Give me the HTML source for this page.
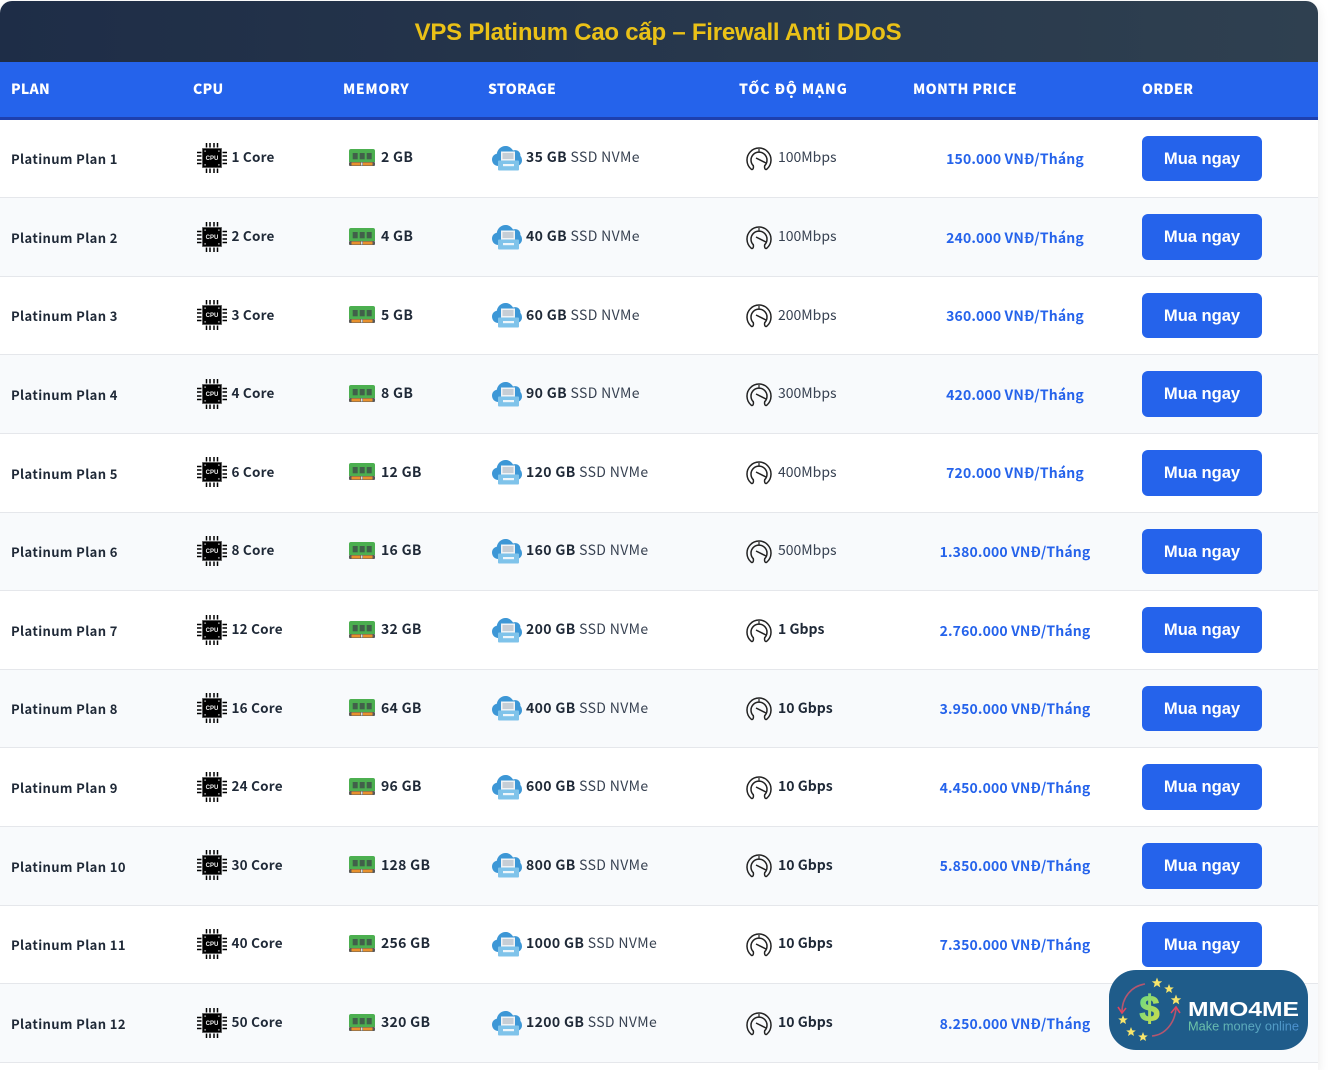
<!DOCTYPE html>
<html lang="vi"><head><meta charset="utf-8"><title>VPS Platinum</title>
<style>
html,body{margin:0;padding:0;background:#fff;width:1331px;height:1070px;overflow:hidden}
body{font-family:"Noto Sans CJK JP","Liberation Sans",sans-serif;position:relative}
#card{position:absolute;left:0;top:1px;width:1318px;height:1069px;background:#fff;border-radius:12px 12px 0 0;overflow:hidden}
#shadow{position:absolute;left:0;top:1px;width:1318px;height:1069px;border-radius:12px 12px 0 0;box-shadow:0 4px 12px rgba(0,0,0,.09)}
#title{position:absolute;left:0;top:0;width:1316px;padding-right:2px;height:61px;background:linear-gradient(90deg,#1e2d47,#2f4050);color:#eac117;font:700 24px/63px "Liberation Sans",sans-serif;text-align:center;letter-spacing:-.24px}
#head{position:absolute;left:0;top:61px;width:1318px;height:55px;background:#2563eb;border-bottom:3px solid #1e40af;color:#fff;font-weight:900;font-size:14px}
#head span{position:absolute;top:0;line-height:55px;white-space:nowrap;letter-spacing:.3px}
.r{position:absolute;left:0;width:1318px;height:78.6px;border-bottom:1px solid #e5e7eb;box-sizing:border-box;background:#fff}
.r.e{background:#f8fafc}
.r>*{position:absolute;white-space:nowrap}
.p{left:11px;top:28.6px;font-size:13px;line-height:22px;font-weight:700;color:#1f2937;letter-spacing:.38px}
.t{top:26.8px;font-size:14px;line-height:22px;color:#374151;letter-spacing:.3px}
.t b{color:#1f2937;font-weight:700}
.t.c{left:231.5px;top:25.9px;font-size:13.5px;letter-spacing:.2px}.m{left:381px}.s{left:526px;letter-spacing:.35px}.t.n{left:778px;letter-spacing:0}
.v{left:915px;width:200px;text-align:center;top:28.4px;font-size:14px;line-height:22px;font-weight:700;color:#2563eb;letter-spacing:.14px}
.a{left:1142px;top:16px;width:120px;height:45.5px;background:#2563eb;border-radius:6px;color:#fff;text-align:center;font:700 16.6px/45px "Liberation Sans",sans-serif;letter-spacing:-.05px}
.i1{left:197px;top:23.4px}.i2{left:349px;top:29.4px}.i3{left:492px;top:25.4px}.i4{left:745px;top:27.4px}
#logo{position:absolute;left:1109px;top:970px;width:199px;height:80px;border-radius:27px;background:#1f5c8a}
</style></head><body>
<svg width="0" height="0" style="position:absolute">
<defs>
<symbol id="cpu" viewBox="0 0 30 30">
<path d="M9.500 0v4.500M13 0v4.500M17 0v4.500M20.500 0v4.500M9.500 25.500V30M13 25.500V30M17 25.500V30M20.500 25.500V30M0 9.500h4.500M0 13h4.500M0 17h4.500M0 20.500h4.500M25.500 9.500H30M25.500 13H30M25.500 17H30M25.500 20.500H30" stroke="#000" stroke-width="1.500"/>
<rect x="5.500" y="5.500" width="19" height="19" fill="#000" stroke="#555" stroke-width=".8"/>
<text x="15" y="17" text-anchor="middle" font-family="Liberation Sans, sans-serif" font-weight="700" font-size="6" fill="#eee">CPU</text>
<path d="M7.500 7.500h1.200v1.200H7.500zM21.300 7.500h1.200v1.200h-1.200zM7.500 21.300h1.200v1.200H7.500zM21.300 21.300h1.200v1.200h-1.200z" fill="#fff"/>
</symbol>
<symbol id="ram" viewBox="0 0 26 17">
<path d="M2 0h22a2 2 0 0 1 2 2v11H0V2a2 2 0 0 1 2-2z" fill="#4caf50"/>
<rect x="3.700" y="4" width="5" height="6.300" fill="#41604a"/><rect x="10.700" y="4" width="5" height="6.300" fill="#41604a"/><rect x="17.700" y="4" width="5" height="6.300" fill="#41604a"/>
<rect x="0" y="13" width="26" height="4" rx="1" fill="#5a5a5a"/>
<rect x="2.500" y="13.500" width="9" height="3" fill="#e8912d"/><rect x="14" y="13.500" width="9.500" height="3" fill="#e8912d"/><rect x="12" y="13.500" width="1.500" height="3" fill="#ddd"/>
</symbol>
<symbol id="cl" viewBox="0 0 30 26">
<path d="M6.500 21C2.500 21 0 18 0 14.500 0 11.500 2 9.300 4.800 8.700 5.500 4.500 9 1 13.500 1c3.400 0 6 1.800 7.500 4.500 .7-.3 1.500-.4 2.200-.4 3 0 5.200 2.300 5.200 5 0 .3 0 .5-.1.800C29.300 11.800 30 13.500 30 15.500 30 18.500 27.500 21 24.500 21z" fill="#3d97d6"/>
<rect x="9" y="6.500" width="14" height="10" fill="#f0f3f5"/><rect x="10.500" y="8" width="11" height="6" fill="#c6ced6"/>
<rect x="6" y="15.500" width="21" height="10" rx="1" fill="#7fc3ea"/><rect x="11" y="19" width="11" height="2.200" fill="#eef6fb"/>
</symbol>
<symbol id="sp" viewBox="0 0 28 24">
<path d="M6 22A12 12 0 1 1 22 22C21 23 19 22.500 19.700 18.700A8 8 0 1 0 8.300 18.700C9 22.500 7 23 6 22Z" fill="none" stroke="#222" stroke-width="1.500" stroke-linejoin="round"/>
<path d="M11 11l10 5" stroke="#222" stroke-width="1.500" fill="none"/><path d="M14 2v3" stroke="#222" stroke-width="1.200"/>
</symbol>
<symbol id="star" viewBox="-5.500 -5.500 11 11" overflow="visible"><path d="M0-5 1.300-1.600 4.800-1.500 2.100.6 3 4 0 2.100-3 4-2.100.6-4.800-1.500-1.300-1.600z" fill="#f7e56b"/></symbol>
</defs></svg>
<div id="shadow"></div>
<div id="card">
<div id="title">VPS Platinum Cao cấp – Firewall Anti DDoS</div>
<div id="head"><span style="left:11px">PLAN</span><span style="left:193px">CPU</span><span style="left:343px;letter-spacing:.65px">MEMORY</span><span style="left:488px">STORAGE</span><span style="left:739px;letter-spacing:.85px">TỐC ĐỘ MẠNG</span><span style="left:913px;letter-spacing:.4px">MONTH PRICE</span><span style="left:1142px">ORDER</span></div>

<div class="r" style="top:118.6px"><span class="p">Platinum Plan 1</span><svg class="i1" width="30" height="30"><use href="#cpu"/></svg><span class="t c"><b>1 Core</b></span><svg class="i2" width="26" height="17"><use href="#ram"/></svg><span class="t m"><b>2 GB</b></span><svg class="i3" width="30" height="26"><use href="#cl"/></svg><span class="t s"><b>35 GB</b> SSD NVMe</span><svg class="i4" width="28" height="24"><use href="#sp"/></svg><span class="t n">100Mbps</span><span class="v">150.000 VNĐ/Tháng</span><span class="a">Mua ngay</span></div>
<div class="r e" style="top:197.2px"><span class="p">Platinum Plan 2</span><svg class="i1" width="30" height="30"><use href="#cpu"/></svg><span class="t c"><b>2 Core</b></span><svg class="i2" width="26" height="17"><use href="#ram"/></svg><span class="t m"><b>4 GB</b></span><svg class="i3" width="30" height="26"><use href="#cl"/></svg><span class="t s"><b>40 GB</b> SSD NVMe</span><svg class="i4" width="28" height="24"><use href="#sp"/></svg><span class="t n">100Mbps</span><span class="v">240.000 VNĐ/Tháng</span><span class="a">Mua ngay</span></div>
<div class="r" style="top:275.8px"><span class="p">Platinum Plan 3</span><svg class="i1" width="30" height="30"><use href="#cpu"/></svg><span class="t c"><b>3 Core</b></span><svg class="i2" width="26" height="17"><use href="#ram"/></svg><span class="t m"><b>5 GB</b></span><svg class="i3" width="30" height="26"><use href="#cl"/></svg><span class="t s"><b>60 GB</b> SSD NVMe</span><svg class="i4" width="28" height="24"><use href="#sp"/></svg><span class="t n">200Mbps</span><span class="v">360.000 VNĐ/Tháng</span><span class="a">Mua ngay</span></div>
<div class="r e" style="top:354.4px"><span class="p">Platinum Plan 4</span><svg class="i1" width="30" height="30"><use href="#cpu"/></svg><span class="t c"><b>4 Core</b></span><svg class="i2" width="26" height="17"><use href="#ram"/></svg><span class="t m"><b>8 GB</b></span><svg class="i3" width="30" height="26"><use href="#cl"/></svg><span class="t s"><b>90 GB</b> SSD NVMe</span><svg class="i4" width="28" height="24"><use href="#sp"/></svg><span class="t n">300Mbps</span><span class="v">420.000 VNĐ/Tháng</span><span class="a">Mua ngay</span></div>
<div class="r" style="top:433px"><span class="p">Platinum Plan 5</span><svg class="i1" width="30" height="30"><use href="#cpu"/></svg><span class="t c"><b>6 Core</b></span><svg class="i2" width="26" height="17"><use href="#ram"/></svg><span class="t m"><b>12 GB</b></span><svg class="i3" width="30" height="26"><use href="#cl"/></svg><span class="t s"><b>120 GB</b> SSD NVMe</span><svg class="i4" width="28" height="24"><use href="#sp"/></svg><span class="t n">400Mbps</span><span class="v">720.000 VNĐ/Tháng</span><span class="a">Mua ngay</span></div>
<div class="r e" style="top:511.6px"><span class="p">Platinum Plan 6</span><svg class="i1" width="30" height="30"><use href="#cpu"/></svg><span class="t c"><b>8 Core</b></span><svg class="i2" width="26" height="17"><use href="#ram"/></svg><span class="t m"><b>16 GB</b></span><svg class="i3" width="30" height="26"><use href="#cl"/></svg><span class="t s"><b>160 GB</b> SSD NVMe</span><svg class="i4" width="28" height="24"><use href="#sp"/></svg><span class="t n">500Mbps</span><span class="v">1.380.000 VNĐ/Tháng</span><span class="a">Mua ngay</span></div>
<div class="r" style="top:590.2px"><span class="p">Platinum Plan 7</span><svg class="i1" width="30" height="30"><use href="#cpu"/></svg><span class="t c"><b>12 Core</b></span><svg class="i2" width="26" height="17"><use href="#ram"/></svg><span class="t m"><b>32 GB</b></span><svg class="i3" width="30" height="26"><use href="#cl"/></svg><span class="t s"><b>200 GB</b> SSD NVMe</span><svg class="i4" width="28" height="24"><use href="#sp"/></svg><span class="t n"><b>1 Gbps</b></span><span class="v">2.760.000 VNĐ/Tháng</span><span class="a">Mua ngay</span></div>
<div class="r e" style="top:668.8px"><span class="p">Platinum Plan 8</span><svg class="i1" width="30" height="30"><use href="#cpu"/></svg><span class="t c"><b>16 Core</b></span><svg class="i2" width="26" height="17"><use href="#ram"/></svg><span class="t m"><b>64 GB</b></span><svg class="i3" width="30" height="26"><use href="#cl"/></svg><span class="t s"><b>400 GB</b> SSD NVMe</span><svg class="i4" width="28" height="24"><use href="#sp"/></svg><span class="t n"><b>10 Gbps</b></span><span class="v">3.950.000 VNĐ/Tháng</span><span class="a">Mua ngay</span></div>
<div class="r" style="top:747.4px"><span class="p">Platinum Plan 9</span><svg class="i1" width="30" height="30"><use href="#cpu"/></svg><span class="t c"><b>24 Core</b></span><svg class="i2" width="26" height="17"><use href="#ram"/></svg><span class="t m"><b>96 GB</b></span><svg class="i3" width="30" height="26"><use href="#cl"/></svg><span class="t s"><b>600 GB</b> SSD NVMe</span><svg class="i4" width="28" height="24"><use href="#sp"/></svg><span class="t n"><b>10 Gbps</b></span><span class="v">4.450.000 VNĐ/Tháng</span><span class="a">Mua ngay</span></div>
<div class="r e" style="top:826px"><span class="p">Platinum Plan 10</span><svg class="i1" width="30" height="30"><use href="#cpu"/></svg><span class="t c"><b>30 Core</b></span><svg class="i2" width="26" height="17"><use href="#ram"/></svg><span class="t m"><b>128 GB</b></span><svg class="i3" width="30" height="26"><use href="#cl"/></svg><span class="t s"><b>800 GB</b> SSD NVMe</span><svg class="i4" width="28" height="24"><use href="#sp"/></svg><span class="t n"><b>10 Gbps</b></span><span class="v">5.850.000 VNĐ/Tháng</span><span class="a">Mua ngay</span></div>
<div class="r" style="top:904.6px"><span class="p">Platinum Plan 11</span><svg class="i1" width="30" height="30"><use href="#cpu"/></svg><span class="t c"><b>40 Core</b></span><svg class="i2" width="26" height="17"><use href="#ram"/></svg><span class="t m"><b>256 GB</b></span><svg class="i3" width="30" height="26"><use href="#cl"/></svg><span class="t s"><b>1000 GB</b> SSD NVMe</span><svg class="i4" width="28" height="24"><use href="#sp"/></svg><span class="t n"><b>10 Gbps</b></span><span class="v">7.350.000 VNĐ/Tháng</span><span class="a">Mua ngay</span></div>
<div class="r e" style="top:983.2px"><span class="p">Platinum Plan 12</span><svg class="i1" width="30" height="30"><use href="#cpu"/></svg><span class="t c"><b>50 Core</b></span><svg class="i2" width="26" height="17"><use href="#ram"/></svg><span class="t m"><b>320 GB</b></span><svg class="i3" width="30" height="26"><use href="#cl"/></svg><span class="t s"><b>1200 GB</b> SSD NVMe</span><svg class="i4" width="28" height="24"><use href="#sp"/></svg><span class="t n"><b>10 Gbps</b></span><span class="v">8.250.000 VNĐ/Tháng</span><span class="a">Mua ngay</span></div>
</div>
<div id="logo">
<svg width="199" height="80" viewBox="0 0 199 80" style="position:absolute;left:0;top:0">
<defs><linearGradient id="g" x1="0" y1="0" x2="1" y2="1"><stop offset="0" stop-color="#5fd98a"/><stop offset="1" stop-color="#d9dc45"/></linearGradient>
<linearGradient id="tg" x1="0" y1="0" x2="1" y2="0"><stop offset="0" stop-color="#6fc7a5"/><stop offset="1" stop-color="#4a8fd0"/></linearGradient></defs>
<path d="M36 14C22 16 13 28 13 42" fill="none" stroke="#b5566f" stroke-width="1.600"/><path d="M9 37l4 6 4-5" fill="none" stroke="#e0455f" stroke-width="1.600"/>
<path d="M43 66C56 65 66 53 67 38" fill="none" stroke="#b5566f" stroke-width="1.600"/><path d="M62 43l5-6 4 6" fill="none" stroke="#e0455f" stroke-width="1.600"/>
<text x="40.500" y="51" text-anchor="middle" font-family="Liberation Sans, sans-serif" font-weight="700" font-size="36" fill="url(#g)" stroke="url(#g)" stroke-width="1">$</text>
<use href="#star" x="42" y="7" width="12" height="12"/>
<use href="#star" x="54.500" y="13.500" width="11" height="11"/>
<use href="#star" x="61" y="24" width="12" height="12"/>
<use href="#star" x="8.500" y="44.500" width="11" height="11"/>
<use href="#star" x="16.500" y="56.500" width="11" height="11"/>
<use href="#star" x="28.500" y="61.500" width="11" height="11"/>
<text x="79" y="46" font-family="Liberation Sans, sans-serif" font-weight="700" font-size="20.500" fill="#fff" textLength="111" lengthAdjust="spacingAndGlyphs">MMO4ME</text>
<text x="79" y="60.700" font-family="Liberation Sans, sans-serif" font-size="12.500" fill="url(#tg)" textLength="111" lengthAdjust="spacingAndGlyphs">Make money online</text>
</svg>
</div>
</body></html>
